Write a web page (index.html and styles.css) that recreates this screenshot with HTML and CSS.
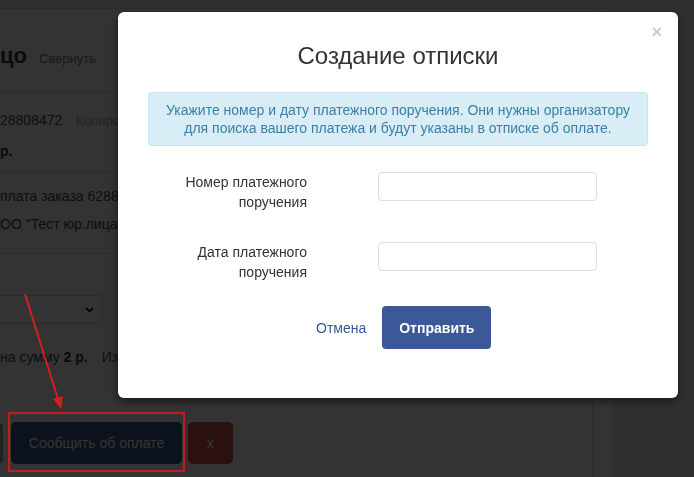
FILE: index.html
```html
<!DOCTYPE html>
<html lang="ru">
<head>
<meta charset="utf-8">
<title>Создание отписки</title>
<link rel="stylesheet" href="styles.css">
</head>
<body>
<div class="page">
  <div class="panel">
    <main class="content">
      <section class="sec sec-head">
        <h1 class="page-title">цо</h1>
        <a class="link-collapse" href="#">Свернуть</a>
      </section>
      <section class="sec sec-order">
        <div class="line"><span class="order-num">28808472</span><a class="copy" href="#">Копировать</a></div>
        <div class="line"><b>р.</b></div>
      </section>
      <section class="sec sec-pay">
        <div class="line">плата заказа 628808472</div>
        <div class="line">ОО "Тест юр.лица"</div>
      </section>
      <section class="sec sec-form">
        <div class="select">
          <svg class="chev" width="9" height="6" viewBox="0 0 9 6"><path d="M1 1l3.5 3.5L8 1" fill="none" stroke="#222" stroke-width="1.8"/></svg>
        </div>
        <div class="line sum-line">на сумму <b>2 р.</b><span class="edit">Изменить</span></div>
        <div class="actions">
          <button class="btn btn-prev"></button>
          <button class="btn btn-report">Сообщить об оплате</button>
          <button class="btn btn-x">x</button>
        </div>
      </section>
    </main>
    <div class="strip"></div>
  </div>
</div>

<div class="backdrop"></div>

<div class="modal">
  <button class="modal-close" aria-label="Закрыть">×</button>
  <h2 class="modal-title">Создание отписки</h2>
  <div class="alert">Укажите номер и дату платежного поручения. Они нужны организатору<br>для поиска вашего платежа и будут указаны в отписке об оплате.</div>
  <div class="form-row">
    <label class="form-label">Номер платежного поручения</label>
    <input class="form-input" type="text">
  </div>
  <div class="form-row form-row-2">
    <label class="form-label">Дата платежного поручения</label>
    <input class="form-input" type="text">
  </div>
  <div class="modal-footer">
    <a class="cancel" href="#">Отмена</a>
    <button class="btn-submit">Отправить</button>
  </div>
</div>

<svg class="annot" width="694" height="477" viewBox="0 0 694 477">
  <line x1="25" y1="294" x2="58" y2="399" stroke="#d21f1f" stroke-width="2"/>
  <polygon points="61,409 53,399 63,396" fill="#d21f1f"/>
  <rect x="9" y="413" width="175" height="58" fill="none" stroke="#c41c1c" stroke-width="2"/>
</svg>
</body>
</html>
```

FILE: styles.css
```css
html, body {
  margin: 0;
  padding: 0;
  height: 100%;
  overflow: hidden;
}

body {
  background: #f0f0f0;
  font-family: "Liberation Sans", Arial, sans-serif;
  font-size: 14px;
  color: #333;
  position: relative;
}

.page {
  padding-top: 8px;
  height: 100%;
  box-sizing: border-box;
}

.panel {
  display: flex;
  width: 614px;
  height: 100%;
  box-sizing: border-box;
  background: #fff;
  border-top: 1px solid #ddd;
  border-right: 1px solid #ddd;
}

.content {
  width: 593px;
  box-sizing: border-box;
  border-right: 1px solid #ddd;
  overflow: hidden;
  white-space: nowrap;
}

.strip {
  flex: 1;
}

.sec {
  border-bottom: 1px solid #ddd;
}

.line {
  line-height: 20px;
  color: #4a4a4a;
}

.sec-head {
  display: flex;
  align-items: baseline;
  gap: 12px;
  padding: 32px 0 20px;
}

.page-title {
  margin: 0;
  font-size: 22px;
  line-height: 30px;
  font-weight: bold;
  color: #333;
}

.link-collapse {
  font-size: 13px;
  color: #6a7fa0;
  text-decoration: none;
}

.sec-order {
  padding: 18px 0 11px;
}

.sec-order .line + .line {
  margin-top: 10px;
}

.sec-order b {
  color: #333;
}

.copy {
  margin-left: 14px;
  font-size: 13px;
  color: #a8a8a8;
  text-decoration: none;
}

.sec-pay {
  padding: 13px 0 19px;
}

.sec-pay .line + .line {
  margin-top: 8px;
}

.sec-form {
  border-bottom: none;
  padding-top: 41px;
}

.select {
  margin-left: -20px;
  width: 123px;
  height: 29px;
  box-sizing: border-box;
  border: 1px solid #ccc;
  border-radius: 4px;
  display: flex;
  align-items: center;
  justify-content: flex-end;
  padding-right: 8px;
}

.chev {
  display: block;
}

.sum-line {
  margin-top: 23px;
}

.sum-line b {
  color: #333;
}

.edit {
  margin-left: 14px;
}

.actions {
  display: flex;
  margin-top: 55px;
}

.btn {
  height: 42px;
  border: 0;
  border-radius: 5px;
  font-family: inherit;
  font-size: 14px;
  color: #fff;
  padding: 0;
}

.btn-prev {
  margin-left: -40px;
  width: 43px;
  background: #a0a0a0;
}

.btn-report {
  margin-left: 8px;
  width: 171px;
  background: #3b5998;
}

.btn-x {
  margin-left: 6px;
  width: 45px;
  background: #d9534f;
}

.backdrop {
  position: fixed;
  inset: 0;
  background: rgba(0, 0, 0, 0.8);
}

.modal {
  position: absolute;
  left: 118px;
  top: 12px;
  width: 560px;
  box-sizing: border-box;
  padding: 31px 30px 49px;
  background: #fff;
  border-radius: 6px;
  box-shadow: 0 3px 9px rgba(0, 0, 0, 0.5);
}

.modal-close {
  position: absolute;
  right: 16px;
  top: 10px;
  border: 0;
  background: none;
  padding: 0;
  font-family: "Liberation Sans", Arial, sans-serif;
  font-size: 18px;
  line-height: 20px;
  font-weight: bold;
  color: #c9cdd6;
}

.modal-title {
  margin: 0;
  font-size: 24px;
  line-height: 26px;
  font-weight: normal;
  text-align: center;
  color: #333;
}

.alert {
  margin-top: 23px;
  padding: 8px 10px;
  border: 1px solid #c4e5f1;
  border-radius: 4px;
  background: #d9edf7;
  color: #3a7fa6;
  line-height: 18px;
  text-align: center;
  white-space: nowrap;
}

.form-row {
  display: flex;
  align-items: flex-start;
  margin-top: 26px;
}

.form-row-2 {
  margin-top: 30px;
}

.form-label {
  width: 159px;
  text-align: right;
  line-height: 20px;
  color: #333;
}

.form-input {
  margin: 0 0 0 71px;
  width: 219px;
  height: 29px;
  box-sizing: border-box;
  border: 1px solid #ddd;
  border-radius: 4px;
  background: #fff;
  padding: 0 8px;
  font-family: inherit;
  font-size: 14px;
}

.modal-footer {
  display: flex;
  align-items: center;
  gap: 16px;
  margin-top: 24px;
  padding-left: 168px;
}

.cancel {
  color: #3b5998;
  text-decoration: none;
}

.btn-submit {
  height: 43px;
  padding: 0 17px;
  border: 0;
  border-radius: 4px;
  background: #3b5998;
  color: #fff;
  font-family: inherit;
  font-size: 14px;
  font-weight: bold;
}

.annot {
  position: absolute;
  left: 0;
  top: 0;
  pointer-events: none;
}
```
